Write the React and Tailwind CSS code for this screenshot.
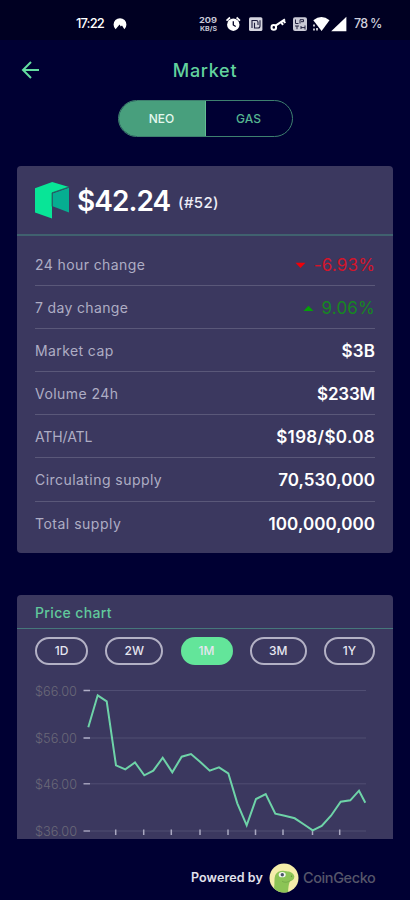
import React from "react";

const stats = [
  { label: "24 hour change", value: "-6.93%", dir: "down", labelCls: "tracking-[0.4px]", valueCls: "text-[#d3152b] tracking-[0.15px]" },
  { label: "7 day change", value: "9.06%", dir: "up", labelCls: "tracking-[0.35px]", valueCls: "text-[#168722] tracking-[0.2px]" },
  { label: "Market cap", value: "$3B", labelCls: "tracking-[0.4px]", valueCls: "font-semibold text-white tracking-[0.1px]" },
  { label: "Volume 24h", value: "$233M", labelCls: "tracking-[0.45px]", valueCls: "font-semibold text-white tracking-[-0.2px]" },
  { label: "ATH/ATL", value: "$198/$0.08", labelCls: "tracking-[-0.1px]", valueCls: "font-semibold text-white tracking-[0.35px]" },
  { label: "Circulating supply", value: "70,530,000", labelCls: "tracking-[0.45px]", valueCls: "font-semibold text-white tracking-[0.05px]" },
  { label: "Total supply", value: "100,000,000", labelCls: "tracking-[0.5px]", valueCls: "font-semibold text-white tracking-[0.05px]" },
];

const ranges = [
  { label: "1D", cls: "w-[53px] border-2 border-[#b3b1c5]" },
  { label: "2W", cls: "w-[58px] border-2 border-[#b3b1c5]" },
  { label: "1M", cls: "w-[52px] bg-[#63e59a]" },
  { label: "3M", cls: "w-[57px] border-2 border-[#b3b1c5]" },
  { label: "1Y", cls: "w-[51px] border-2 border-[#b3b1c5]" },
];

const gridLines = [
  [690.5, "$66.00"],
  [738, "$56.00"],
  [783.8, "$46.00"],
  [831, "$36.00"],
];

const ticks = [115.7, 143.7, 171.3, 200, 228, 255.5, 283, 312.5, 339.7];

const pricePath =
  "88.3,727.3 97.7,695.3 106.7,701.3 116,765.3 125.3,769.3 135,762.5 144.3,775.3 153.3,770.7 162.7,757.7 172.3,772.3 181.7,756.7 191,754 200,761.7 209.7,770.7 219,767.3 228.3,773.3 237.3,803.3 246.7,825.3 256,799 265.7,794 275.3,813.7 284.7,815.7 294.7,818.3 303.3,824 312.7,830.3 321.7,826 331,815.7 340.7,801.7 350.3,800.3 359,790.7 365.3,802.7";

function StatusBar() {
  return (
    <div className="flex h-10 items-center bg-[#000022] pt-2 pr-[28px] pl-[76px] text-white">
      <span className="w-[29px] text-[13px] font-medium whitespace-nowrap tracking-[-0.9px]">17:22</span>
      <svg className="ml-2 h-[14px] w-[14px]" viewBox="0 0 14 14">
        <path d="M2.6 12.2A6.4 6.4 0 1 1 11.4 12.2L9 8.4 7.7 9.6 6.6 7.4Z" fill="#fff" />
      </svg>
      <svg className="ml-auto h-[18px] w-[150px]" viewBox="198 15 150 18" fill="none" stroke="#fff">
        <g stroke="none" fill="#c9c9d8" fontFamily="Inter, sans-serif" fontWeight="700">
          <text x="199" y="22.6" fontSize="7.5" textLength="18" lengthAdjust="spacingAndGlyphs">209</text>
          <text x="200" y="31" fontSize="6.5" textLength="17" lengthAdjust="spacingAndGlyphs">KB/S</text>
        </g>
        <circle cx="233.3" cy="24.7" r="6.2" fill="#fff" stroke="none" />
        <path d="M226.5 20.6 230 17.5M240 20.6 236.6 17.5" strokeWidth="1.7" />
        <path d="M233.3 21.3V25l2.4 1.5" stroke="#000022" strokeWidth="1.3" />
        <rect x="249" y="17.3" width="13.4" height="13.6" rx="1.5" fill="#d5d5df" stroke="none" />
        <path d="M252 28V20.5h4.2q1.8 0 1.8 1.8V25M254.5 22.8V28h3.5q2 0 2-2V20.2" stroke="#1b1b3c" strokeWidth="1.1" />
        <circle cx="273.8" cy="27.4" r="2.3" strokeWidth="2" />
        <path d="M275.6 25.7 285 19.3M281 22l2 2.8M283.3 20.4l1.9 2.6" strokeWidth="2.1" />
        <rect x="293" y="17.2" width="14" height="13.8" rx="2" fill="#cacad6" stroke="none" />
        <g stroke="#22223f" strokeWidth="1">
          <path d="M295.5 19.5v4h3M300 23.5v-3.8h3.5v2H301M295 26h4M297 26v3.2M301 26v3M301 27.6h4M305 25.5v4" />
        </g>
        <path d="M313.3 20.2Q321.5 13.8 329.5 20.2L321.6 31Z" fill="#fff" stroke="none" />
        <path d="M314 24.5v2M314 28.5v2M317 28v2.5" strokeWidth="1.5" />
        <path d="M346.4 16.7V31.2H331.2Z" fill="#fff" stroke="none" />
      </svg>
      <span className="ml-[6px] w-[28px] text-[12.5px] font-medium whitespace-nowrap tracking-[-0.75px] text-[#cfcfdd]">78 %</span>
    </div>
  );
}

function NeoLogo() {
  return (
    <svg className="h-[38px] w-[35px]" viewBox="0 0 35 38">
      <path d="M0 7.2 17.2 1 34 5.9 17 11.8V37.5L0 31.4Z" fill="#08e597" />
      <path d="M17.6 12.5 34 6.7V31.5L17.6 25.2Z" fill="#06ae91" />
      <path d="M34 5.9 17 11.8V25.5" fill="none" stroke="#21665f" strokeWidth=".8" />
    </svg>
  );
}

function GeckoLogo() {
  return (
    <svg className="h-[30px] w-[30px]" viewBox="0 0 30 30">
      <circle cx="15" cy="15" r="14.5" fill="#f4edaa" />
      <path d="M5 25.5C6 20.5 4.8 16 6.3 12 8 8 13.5 6.9 17.5 8.3c3.3.2 7 1.5 7.8 5 .3 2.7-1.7 4.6-4.5 5.2-1.3 3.2-1.5 6.5-1.7 10.4A14.500 14.500 0 0 1 5 25.5Z" fill="#8cc456" />
      <path d="M13 18.200C15.500 19.800 18.500 19.600 21.500 17.600" fill="none" stroke="#72a747" strokeWidth=".8" />
      <ellipse cx="13.2" cy="11.7" rx="3.5" ry="2.6" fill="#f4f6f2" />
      <circle cx="13.3" cy="11.7" r="1.7" fill="#4a5568" />
      <circle cx="22.5" cy="13.2" r=".6" fill="#5b8c40" />
    </svg>
  );
}

export default function App() {
  return (
    <div className="flex h-[900px] w-[410px] flex-col overflow-hidden bg-[#000033] font-['Inter','Noto_Sans',sans-serif]">
      <StatusBar />
      <header className="grid h-[60px] grid-cols-[60px_1fr_60px] items-center">
        <svg className="ml-[21px] h-[18px] w-[19px]" viewBox="0 0 19 18" fill="none" stroke="#63dda0" strokeWidth="2">
          <path d="M18 9H2M10 1 2 9l8 8" />
        </svg>
        <h1 className="text-center text-[18px] font-medium tracking-[0.7px] text-[#62d29e]">Market</h1>
      </header>
      <div className="mx-auto flex h-[37px] w-[175px] overflow-hidden rounded-full border-[1.5px] border-[#3e806f] text-[12px] font-medium">
        <div className="flex w-[87px] items-center justify-center border-r border-[#62bd92] bg-[#489f7d] text-[#e4f8ee]">NEO</div>
        <div className="flex flex-1 items-center justify-center text-[#55b58f]">GAS</div>
      </div>

      <section className="mx-[17px] mt-[29px] h-[387px] shrink-0 rounded-[4px] bg-[#3b385f]">
        <div className="flex h-[70px] items-center border-b-2 border-[#40616f] pl-[18px]">
          <NeoLogo />
          <span className="mt-px ml-[7px] w-[101px] text-[28px] font-semibold whitespace-nowrap tracking-[-0.95px] text-white">$42.24</span>
          <span className="mt-[6px] text-[15px] font-medium tracking-[0.35px] text-[#eeeef7]">(#52)</span>
        </div>
        <div className="flex flex-col px-[18px] pt-[7px]">
          {stats.map((s) => (
            <div key={s.label} className="flex h-[43.1px] items-center justify-between border-b border-[#5a5879] last:border-b-0">
              <span className={`text-[14px] text-[#aeadc4] ${s.labelCls}`}>{s.label}</span>
              <span className={`flex items-center pt-[3px] text-[17px] ${s.valueCls}`}>
                {s.dir === "down" && (
                  <svg className="mr-[8px] h-[7px] w-[11px]" viewBox="0 0 11 7"><path d="M.5 .7H10.500L5.500 6Z" fill="#f00008" /></svg>
                )}
                {s.dir === "up" && (
                  <svg className="mr-[7px] h-[7px] w-[11px]" viewBox="0 0 11 7"><path d="M.5 6H10.500L5.500.7Z" fill="#05a008" /></svg>
                )}
                {s.value}
              </span>
            </div>
          ))}
        </div>
      </section>

      <section className="mx-[17px] mt-[42px] flex h-[244px] shrink-0 flex-col overflow-hidden rounded-t-[4px] bg-[#3b385f]">
        <div className="flex h-[34px] shrink-0 items-center border-b border-[#46777b] pt-[2px] pl-[18px] text-[14px] font-medium tracking-[0.35px] text-[#61c99c]">
          Price chart
        </div>
        <div className="mt-2 flex h-[28px] shrink-0 justify-between pr-[18px] pl-[18px]">
          {ranges.map((r) => (
            <div key={r.label} className={`flex items-center justify-center rounded-full text-[12px] font-medium text-[#e6e6f0] ${r.cls}`}>
              {r.label}
            </div>
          ))}
        </div>
        <svg className="mt-px h-[173px] w-[376px] shrink-0" viewBox="17 666 376 173" fill="none">
          {gridLines.map(([y, label]) => (
            <g key={label}>
              <path d={`M90 ${y}H366`} stroke="#504e73" strokeWidth="1" />
              <path d={`M83.5 ${y}H90`} stroke="#b1afc8" strokeWidth="1.3" />
              <text x="35" y={y + 5.4} fontFamily="Inter, sans-serif" fontSize="13" fontWeight="300" textLength="42" lengthAdjust="spacingAndGlyphs" fill="#6a6878">{label}</text>
            </g>
          ))}
          {ticks.map((x) => (
            <path key={x} d={`M${x} 829.5V835`} stroke="#aaa8c1" strokeWidth="1.5" />
          ))}
          <polyline points={pricePath} stroke="#6ed3a8" strokeWidth="2" />
        </svg>
      </section>

      <footer className="flex flex-1 items-center justify-end pt-[17px] pr-[33px]">
        <span className="text-[12.5px] font-semibold tracking-[0.1px] text-[#e2e2ed]">Powered by</span>
        <span className="mr-1 ml-[6px]"><GeckoLogo /></span>
        <span className="w-[74px] text-[14.5px] font-medium whitespace-nowrap tracking-[-0.4px] text-[#56566a]">CoinGecko</span>
      </footer>
    </div>
  );
}
